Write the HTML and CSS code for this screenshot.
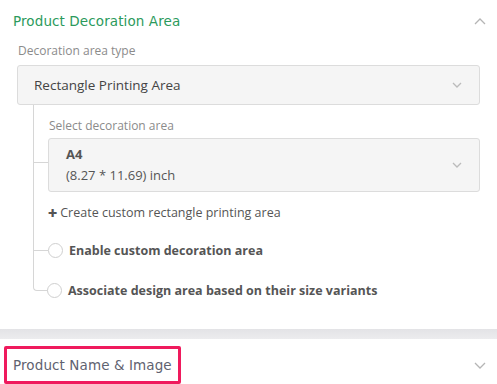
FILE: index.html
```html
<!DOCTYPE html>
<html lang="en">
<head>
    <meta charset="UTF-8">
    <meta name="viewport" content="width=device-width, initial-scale=1.0">
    <title>Product Decoration Area</title>
    <link rel="stylesheet" href="styles.css">
</head>
<body>
    <div class="panel">
        <div class="panel-header">
            <span class="panel-title green">Product Decoration Area</span>
            <svg class="chevron" width="12" height="8" viewBox="0 0 12 8"><path d="M1 7 L6 2 L11 7" fill="none" stroke="#b5b5b5" stroke-width="1.3"/></svg>
        </div>
        <div class="panel-body">
            <div class="field-label">Decoration area type</div>
            <div class="select">
                <span>Rectangle Printing Area</span>
                <svg class="chevron" width="10" height="6" viewBox="0 0 10 6"><path d="M1 1 L5 5 L9 1" fill="none" stroke="#bbb" stroke-width="1.3"/></svg>
            </div>
            <div class="tree">
                <div class="tree-item branch area-item">
                    <div class="field-label">Select decoration area</div>
                    <div class="select tall">
                        <div>
                            <div class="select-main">A4</div>
                            <div class="select-sub">(8.27 * 11.69) inch</div>
                        </div>
                        <svg class="chevron" width="10" height="6" viewBox="0 0 10 6"><path d="M1 1 L5 5 L9 1" fill="none" stroke="#bbb" stroke-width="1.3"/></svg>
                    </div>
                </div>
                <div class="tree-item create">
                    <span class="plus">&#10010;</span> Create custom rectangle printing area
                </div>
                <div class="tree-item branch radio-item">
                    <span class="radio"></span>
                    <span class="radio-label">Enable custom decoration area</span>
                </div>
                <div class="tree-item branch last radio-item">
                    <span class="radio"></span>
                    <span class="radio-label">Associate design area based on their size variants</span>
                </div>
            </div>
        </div>
    </div>
    <div class="divider"></div>
    <div class="panel">
        <div class="panel-header second">
            <span class="panel-title gray highlight">Product Name &amp; Image</span>
            <svg class="chevron" width="12" height="8" viewBox="0 0 12 8"><path d="M1 1 L6 6 L11 1" fill="none" stroke="#b5b5b5" stroke-width="1.3"/></svg>
        </div>
    </div>
</body>
</html>
```
FILE: styles.css
```css
body {
    margin: 0;
    background: #fff;
    font-family: "Open Sans", "Noto Sans", sans-serif;
    color: #444;
}
.panel {
    background: #fff;
}
.panel-header {
    display: flex;
    align-items: center;
    justify-content: space-between;
    height: 42px;
    padding: 0 11px 0 13px;
}
.panel-title {
    font-family: "DejaVu Sans", sans-serif;
    font-size: 13.5px;
    letter-spacing: 0.1px;
}
.green {
    color: #2b9a5c;
}
.gray {
    color: #5f6270;
}
.panel-body {
    padding: 0 17px 19px 17px;
}
.field-label {
    font-size: 12px;
    color: #8b8b8b;
    height: 17px;
    line-height: 17px;
    margin-left: 1px;
}
.select {
    display: flex;
    align-items: center;
    justify-content: space-between;
    background: #f5f5f5;
    border: 1px solid #dcdcdc;
    border-radius: 3px;
    height: 38px;
    padding: 0 17px 0 16px;
    margin-top: 6px;
    font-size: 13.5px;
    color: #444;
}
.select.tall {
    height: 52px;
    padding-left: 17px;
    margin-top: 4px;
}
.select-main {
    font-weight: 700;
    font-size: 13px;
    line-height: 20px;
    color: #555;
}
.select-sub {
    font-size: 13px;
    line-height: 22px;
    color: #555;
}
.tree {
    margin-left: 16px;
}
.tree-item {
    position: relative;
    padding-left: 14px;
    border-left: 1px solid #d6d6d6;
}
.tree-item.branch::before {
    content: "";
    position: absolute;
    left: 0;
    width: 14px;
    border-top: 1px solid #d6d6d6;
}
.area-item {
    padding-top: 12px;
}
.area-item::before {
    top: 57px;
}
.create {
    font-size: 12.5px;
    color: #555;
    padding-top: 12px;
    padding-bottom: 9px;
}
.plus {
    font-size: 11px;
    color: #555;
}
.radio-item {
    display: flex;
    align-items: center;
    height: 40px;
}
.radio-item::before {
    top: 20px;
}
.tree-item.last {
    border-left: none;
}
.tree-item.last::before {
    top: 0;
    height: 20px;
    border-top: none;
    border-left: 1px solid #d6d6d6;
    border-bottom: 1px solid #d6d6d6;
    border-bottom-left-radius: 4px;
}
.radio {
    width: 13px;
    height: 13px;
    border: 1px solid #cfcfcf;
    border-radius: 50%;
    background: #fff;
    margin-right: 6px;
}
.radio-label {
    font-weight: 700;
    font-size: 12.5px;
    color: #555;
}
.divider {
    height: 10px;
    background: linear-gradient(#e3e3e6, #ececee);
}
.panel-header.second {
    height: auto;
    padding-top: 7px;
    padding-left: 4px;
    align-items: flex-start;
}
.highlight {
    border: 3px solid #ef1a5d;
    border-radius: 2px;
    padding: 0 6px;
    height: 32px;
    line-height: 32px;
}
.panel-header.second .chevron {
    margin-top: 16px;
}
```
